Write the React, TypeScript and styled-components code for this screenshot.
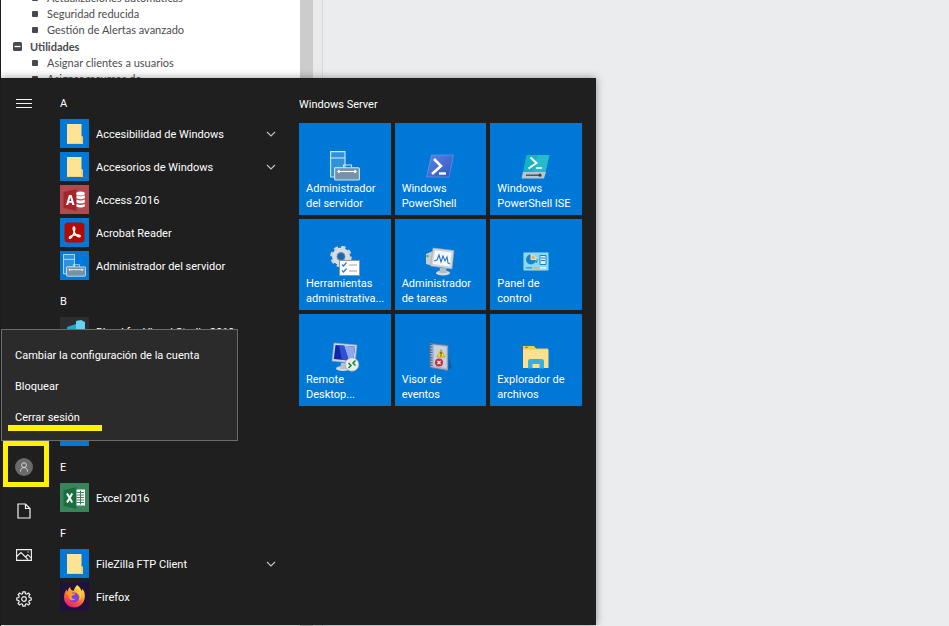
import React from 'react';
import styled, { createGlobalStyle, css } from 'styled-components';

const Global = createGlobalStyle`
  * { box-sizing: border-box; }
  html, body { margin: 0; padding: 0; }
  body { font-family: Roboto, "Noto Sans", sans-serif; font-size: 11px; background: #ebecee; overflow: hidden; }
  button { font: inherit; color: inherit; background: none; border: 0; padding: 0; margin: 0; text-align: left; cursor: pointer; }
  ul { list-style: none; margin: 0; padding: 0; }
  h2, h3 { margin: 0; font: inherit; }
  svg { display: block; flex: none; }
`;

const Desktop = styled.div`
  position: relative;
  display: flex;
  height: 100vh;
  overflow: hidden;
  border-left: 1px solid #1c1c1c;
  background: #ebecee;
`;

const TreePane = styled.nav`
  width: 299px;
  background: #ffffff;
  color: #4c4d50;
  font-family: Lato, "Noto Sans", sans-serif;
  overflow: hidden;
`;

const TreeList = styled.ul<{ $clipped?: boolean }>`
  margin-top: ${p => (p.$clipped ? '-10px' : '0')};
`;

const TreeItem = styled.li`
  display: flex;
  align-items: center;
  gap: 9px;
  padding-left: 31px;
  line-height: 16px;
  white-space: nowrap;
  &::before { content: ''; width: 6px; height: 6px; border-radius: 1px; background: #48494c; }
`;

const TreeHeading = styled.button`
  display: flex;
  align-items: center;
  gap: 8px;
  padding-left: 12px;
  line-height: 17px;
  font-weight: 700;
  color: #4a4b4f;
`;

const ScrollTrack = styled.div`
  width: 13px;
  background: #cccccd;
`;

const Splitter = styled.div`
  width: 10px;
  background: #e9eaeb;
  border-right: 1px solid #d6d7d9;
`;

const StartMenu = styled.section`
  position: absolute;
  top: 78px;
  bottom: 1px;
  left: 0;
  display: flex;
  background: #1f1f1f;
  color: #ffffff;
  box-shadow: 0 0 8px rgba(0, 0, 0, 0.4);
`;

const Rail = styled.div`
  display: flex;
  flex-direction: column;
  width: 46px;
  padding: 4px 0;
`;

const RailButton = styled.button<{ $pushDown?: boolean }>`
  display: flex;
  align-items: center;
  justify-content: center;
  height: 44px;
  ${p => p.$pushDown && css`margin-top: auto;`}
`;

const AccountButton = styled(RailButton)`
  position: relative;
`;

const HighlightFrame = styled.span`
  position: absolute;
  inset: -4px -2px 2px 2px;
  border: 5px solid #fff200;
`;

const AppList = styled.div`
  width: 231px;
  padding: 6px 2px 0 13px;
  overflow: hidden;
`;

const Letter = styled.h2`
  height: 33px;
  padding-top: 5px;
  line-height: 30px;
`;

const AppGroup = styled.section<{ $tall?: boolean }>`
  ${p => p.$tall && css`padding-bottom: 67px;`}
`;

const AppRow = styled.button`
  display: flex;
  align-items: center;
  width: 100%;
  height: 33px;
  gap: 7px;
  white-space: nowrap;
`;

const AppName = styled.span`
  flex: 1;
  padding-top: 2px;
`;

const IconBox = styled.span<{ $bg?: string }>`
  display: flex;
  align-items: center;
  justify-content: center;
  width: 29px;
  height: 29px;
  background: ${p => p.$bg || '#0078d7'};
`;

const TilePane = styled.div`
  width: 318px;
  padding: 15px 14px 14px 21px;
`;

const TileTitle = styled.h2`
  line-height: 24px;
  margin-bottom: 6px;
`;

const TileGrid = styled.div`
  display: grid;
  grid-template-columns: repeat(3, minmax(0, 1fr));
  gap: 4px;
`;

const Tile = styled.button`
  display: flex;
  flex-direction: column;
  justify-content: flex-end;
  aspect-ratio: 1;
  padding: 0 7px 4px;
  background: #0078d7;
  line-height: 15px;
  white-space: nowrap;
  svg { align-self: center; }
`;

const AccountMenu = styled.div`
  position: absolute;
  left: 0;
  bottom: 184px;
  width: 237px;
  padding: 10px 0 7px;
  background: #2b2b2b;
  border: 1px solid #6b6b6b;
`;

const AccountItem = styled.button`
  display: block;
  width: 100%;
  height: 31px;
  padding-left: 13px;
`;

const Marked = styled.span`
  position: relative;
  &::after {
    content: '';
    position: absolute;
    left: -7px;
    right: -22px;
    bottom: -7px;
    height: 6px;
    background: #fff200;
  }
`;

const Chevron = () => (
  <svg width="10" height="6" viewBox="0 0 10 6" fill="none" stroke="#c4c4c4" strokeWidth="1.1">
    <path d="M1 1l4 4 4-4" />
  </svg>
);

const Collapse = () => (
  <svg width="9" height="9" viewBox="0 0 9 9">
    <rect width="9" height="9" rx="1.5" fill="#48494c" />
    <path d="M1.5 4.5h6" stroke="#fff" strokeWidth="1.3" />
  </svg>
);

const FolderIcon = () => (
  <svg width="29" height="29" viewBox="0 0 29 29">
    <path d="M7 5h14.500v12l1.500 1v7H7z" fill="#ffe394" />
    <path d="M21.500 17l1.500 1v7h-2V17z" fill="#f5cf6b" />
    <path d="M7 24h16v1H7z" fill="#f3d27c" />
  </svg>
);

const AccessIcon = () => (
  <svg width="29" height="29" viewBox="0 0 29 29">
    <path d="M3.500 7l13-3v22l-13-3z" fill="#a4262c" />
    <path d="M6 20l3-10h2.600l3 10h-2.300l-.6-2.200H8.800L8.200 20zM9.300 16h2l-1-3.800z" fill="#fff" fillRule="evenodd" />
    <g fill="#fff">
      <ellipse cx="20.500" cy="8.500" rx="4.300" ry="2" />
      <path d="M16.500 10.200q4 2 8.300 0v3q-4.300 2-8.300 0zM16.500 14.600q4 2 8.300 0v3q-4.300 2-8.300 0zM16.500 19q4 2 8.300 0v2.400q-4.300 2-8.300 0z" />
    </g>
  </svg>
);

const AcrobatIcon = () => (
  <svg width="29" height="29" viewBox="0 0 29 29">
    <rect x="4.500" y="4.500" width="20" height="20" rx="3.500" fill="#b30b00" />
    <path d="M14 9c-1.500 0-.8 3.200.6 5.800 1.200 2.200 3 3.900 4.600 3.900 2.300 0 .8-2.300-3.600-1.900-3 .3-6.600 1.500-6.300 3.100.5 1.500 3.200-1.300 4.400-4.300C14.800 12.800 15.200 9 14 9z" fill="none" stroke="#fff" strokeWidth="1.400" />
  </svg>
);

const ServerIcon = ({ size = 30 }: { size?: number }) => (
  <svg width={size} height={size} viewBox="0 0 30 30" fill="none" stroke="#c9e8ee" strokeWidth="1.100">
    <path d="M.6 26V.6H15V17H5v9z" fill="#2d93dd" />
    <path d="M.6 7H15" />
    <path d="M13.500 16.500v-2.500h8v2.500" />
    <rect x="4.600" y="16.800" width="24.800" height="12.200" rx="1" fill="#7592a8" />
    <path d="M7.500 20.500h19" stroke="#fff" />
    <path d="M9.500 19L8 20.500 9.500 22M24.500 19l1.500 1.500-1.500 1.500" stroke="#fff" />
  </svg>
);

const BlendIcon = () => (
  <svg width="29" height="29" viewBox="0 0 29 29">
    <path d="M7 13l9-5 1-3 8 1v14l-9 5-9-4z" fill="#3fb9dc" />
    <path d="M7 10l9-3v8l-9 4z" fill="#2aa3cc" />
    <path d="M16 4l5-1 4 2v7l-9 2z" fill="#62d2ee" />
  </svg>
);

const ExcelIcon = () => (
  <svg width="29" height="29" viewBox="0 0 29 29">
    <path d="M3.500 7l13-3v22l-13-3z" fill="#1a6e3f" />
    <path d="M7 10.500l5.200 9M12.200 10.500L7 19.500" stroke="#fff" strokeWidth="2" />
    <rect x="16.500" y="6.500" width="8.500" height="16" fill="#fff" />
    <path d="M16.500 9.500h7.500M16.500 12h7.500M16.500 14.500h7.500M16.500 17h7.500M16.500 19.500h7.500M20.500 7.500v14" stroke="#39845a" strokeWidth="1" />
  </svg>
);

const FirefoxIcon = () => (
  <svg width="29" height="29" viewBox="0 0 29 29">
    <defs>
      <linearGradient id="fx" x1="0.800" y1="0" x2="0.250" y2="1">
        <stop offset="0" stopColor="#fff44f" />
        <stop offset="0.350" stopColor="#ffb02e" />
        <stop offset="0.650" stopColor="#ff5a36" />
        <stop offset="1" stopColor="#e31587" />
      </linearGradient>
    </defs>
    <path d="M17 3c3 2 4 4 4.500 6 1-.5 1-1.500.8-2.500 2 2.500 2.700 5.500 2.500 8.500-.5 6-5 10.500-10.500 10.500C8.500 25.500 4 21 4 15.500c0-3 .8-5.500 2.500-8 .2 1 .5 1.500 1 2 .5-2 1.500-3.500 2.500-4.500.2 1.500 1 3 2.500 3.500l1.500.2C14 6.500 15.500 5 17 3z" fill="url(#fx)" />
    <circle cx="14" cy="15.500" r="5" fill="#7542e5" />
    <path d="M6.500 11c3-2 5-.5 6 .5h3c-.5 2-3.500 1.500-4 3 0 2 2 3 4 2-2 3.500-7.500 1.500-7-3z" fill="#ff9a2b" />
    <path d="M16.500 10c3.500 1 4.500 5 2.500 8 3-1.500 3.500-6 .5-9z" fill="#ffcf3d" />
  </svg>
);

const MenuIcon = () => (
  <svg width="16" height="10" viewBox="0 0 16 10" stroke="#f2f2f2">
    <path d="M0 .5h16M0 4.500h16M0 8.500h16" />
  </svg>
);

const UserIcon = () => (
  <svg width="18" height="18" viewBox="0 0 18 18" fill="none" stroke="#d6d6d6" strokeWidth="1">
    <circle cx="9" cy="9" r="9" fill="#6a6a6a" stroke="none" />
    <circle cx="9" cy="7.200" r="2.400" />
    <path d="M5.500 13.500c0-2.500 1.500-3.900 3.500-3.900s3.500 1.400 3.500 3.900" />
  </svg>
);

const DocumentIcon = () => (
  <svg width="14" height="16" viewBox="0 0 14 16" fill="none" stroke="#f2f2f2" strokeWidth="1.200">
    <path d="M1 1h7.500L13 5.500V15H1z" />
    <path d="M8.500 1v4.500H13" />
  </svg>
);

const PictureIcon = () => (
  <svg width="16" height="12" viewBox="0 0 16 12" fill="none" stroke="#f2f2f2" strokeWidth="1.100">
    <path d="M.6.6h14.800v10.800H.6z" />
    <path d="M.6 7.500L5 3.500l7 7M9.500 8l2.300-2.300 3.600 3.500" />
    <path d="M11.500 3h1.300" />
  </svg>
);

const GearIcon = () => (
  <svg width="16" height="16" viewBox="0 0 16 16" fill="none" stroke="#f2f2f2" strokeWidth="1.200">
    <path d="M6.900.8h2.200l.4 1.900 1.300.5 1.600-1.100 1.500 1.500-1.100 1.600.5 1.300 1.900.4v2.200l-1.900.4-.5 1.300 1.100 1.600-1.500 1.500-1.600-1.100-1.300.5-.4 1.900H6.900l-.4-1.900-1.300-.5-1.600 1.100-1.500-1.500 1.100-1.600-.5-1.300-1.900-.4V6.900l1.900-.4.5-1.300-1.100-1.600 1.500-1.500 1.600 1.100 1.300-.5z" />
    <circle cx="8" cy="8" r="2.300" />
  </svg>
);

const PowerShellIcon = () => (
  <svg width="30" height="30" viewBox="0 0 30 30">
    <defs>
      <linearGradient id="ps" x1="0" y1="0" x2="1" y2="1">
        <stop offset="0" stopColor="#5d84e6" />
        <stop offset="1" stopColor="#3155bd" />
      </linearGradient>
    </defs>
    <path d="M6.500 4h22L24 26H1.500z" fill="url(#ps)" stroke="#6f9cf0" strokeWidth=".6" />
    <path d="M9 8l7 7-9 8" fill="none" stroke="#fff" strokeWidth="2.600" />
    <path d="M14 22.500h7" stroke="#fff" strokeWidth="2.400" />
  </svg>
);

const PowerShellIseIcon = () => (
  <svg width="30" height="30" viewBox="0 0 30 30">
    <path d="M5.500 4h23l-4 17H2z" fill="#17b3c4" />
    <path d="M17 4h11.500l-4 17H12z" fill="#35c3cf" opacity=".5" />
    <path d="M9.500 6.500l6 5.500-8 5.500" fill="none" stroke="#fff" strokeWidth="2" />
    <path d="M15 17h6" stroke="#fff" strokeWidth="1.600" />
    <path d="M2 21h23l-2 6.500H.5z" fill="#b9c4cb" />
    <path d="M5 24.200h13" stroke="#37454e" strokeWidth="1.300" />
    <circle cx="19" cy="24.200" r="1.600" fill="#37454e" />
  </svg>
);

const ToolsIcon = () => (
  <svg width="30" height="30" viewBox="0 0 30 30">
    <circle cx="11" cy="10.500" r="6.500" fill="none" stroke="#d9dde0" strokeWidth="5" />
    <circle cx="11" cy="10.500" r="9.500" fill="none" stroke="#d0d5d9" strokeWidth="2.600" strokeDasharray="4.200 3.260" />
    <circle cx="11" cy="10.500" r="4" fill="#1769b5" stroke="#7e8c98" />
    <rect x="9.500" y="14.500" width="20" height="15" fill="#fff" stroke="#8a979f" />
    <path d="M12 18.500l1.500 1.500 3-3.500M12 24.500l1.500 1.500 3-3.500" fill="none" stroke="#2a7fd0" strokeWidth="1.300" />
    <path d="M19 19h8M19 25h8" stroke="#9aa4ab" />
  </svg>
);

const TaskManagerIcon = () => (
  <svg width="30" height="30" viewBox="0 0 30 30">
    <path d="M1 8l7-3v15l-7-2z" fill="#c6cccf" />
    <path d="M1.500 9l2 .3v2l-2-.3z" fill="#56a832" />
    <ellipse cx="18" cy="27" rx="7" ry="2.500" fill="#d5dadd" />
    <path d="M15 22h6l1 5h-8z" fill="#b4bcc1" />
    <path d="M8 2l21 2.500-2 18.500L5.500 20z" fill="#cfd5d8" stroke="#98a2a9" strokeWidth=".6" />
    <path d="M10 4.500l16.500 2-1.600 14L8 18z" fill="#f4faff" />
    <path d="M9 15l3-1 2-5 2 7 2-6 2 5 2-4 1 6 2 1" fill="none" stroke="#2672bd" strokeWidth="1.100" />
  </svg>
);

const ControlPanelIcon = () => (
  <svg width="28" height="30" viewBox="0 0 28 30">
    <rect x="1.500" y="6.500" width="25" height="18" rx="1" fill="#8fd8f5" stroke="#4fb0e0" />
    <circle cx="9" cy="13.500" r="5" fill="#1583cf" />
    <path d="M9 13.500v-5a5 5 0 0 1 5 5z" fill="#f6b13a" stroke="#e9f8ff" strokeWidth=".8" />
    <path d="M18 9.500h6v9h-6z" fill="#d5f1fd" stroke="#1583cf" />
    <path d="M19 12h4M19 14.500h4M15.500 13l-1.500 4" stroke="#1583cf" />
    <path d="M4 21.800h6" stroke="#2ba0dd" strokeWidth="1.400" />
    <path d="M11 21.800h6" stroke="#f6b13a" strokeWidth="1.400" />
    <path d="M18 21.800h6" stroke="#eafaff" strokeWidth="1.400" />
  </svg>
);

const RemoteDesktopIcon = () => (
  <svg width="30" height="30" viewBox="0 0 30 30">
    <ellipse cx="13" cy="26.500" rx="7" ry="2.500" fill="#d4dadf" />
    <path d="M11 21h5l1 6h-7z" fill="#b8c1c9" />
    <path d="M4 1l23 2-2 18.500L2 19z" fill="#ccd7e5" stroke="#8fa5c0" strokeWidth=".6" />
    <path d="M5.500 3l19.500 1.800L23.300 19 3.800 17z" fill="#1226a8" />
    <path d="M14 3.800l11 1L23.300 19l-4.500-.5z" fill="#8fa9ee" />
    <path d="M9 3.300l5 .5 4.800 14.700-7-.7z" fill="#2d50d4" />
    <circle cx="22" cy="22.500" r="6.800" fill="#e8ecea" stroke="#99a5a2" strokeWidth=".7" />
    <path d="M18.500 21l2.500 2.500-2.500 2.500M25.500 18.500L23 21l2.500 2.500" fill="none" stroke="#16843c" strokeWidth="1.500" />
  </svg>
);

const EventViewerIcon = () => (
  <svg width="30" height="30" viewBox="0 0 30 30">
    <path d="M22 8l5 18-4 2z" fill="#0b4d91" opacity=".5" />
    <path d="M5 1.500l18 2v25L5 25.500z" fill="#a9b9cf" stroke="#637894" strokeWidth=".8" />
    <path d="M9 3.500l12.500 1.500v21L9 24z" fill="#c6d2e2" />
    <path d="M6 2v24" stroke="#54657e" strokeWidth="3" strokeDasharray="1.200 1.400" />
    <path d="M16 7.500l4 7.500h-8z" fill="#ffdf26" stroke="#b79200" strokeWidth=".7" />
    <path d="M16 9.800v2.600M16 13.200v1" stroke="#222" strokeWidth="1.100" />
    <circle cx="14" cy="20.500" r="4" fill="#cb2c35" />
    <path d="M12.500 19l3 3M15.500 19l-3 3" stroke="#fff" strokeWidth="1.200" />
  </svg>
);

const ExplorerIcon = () => (
  <svg width="28" height="30" viewBox="0 0 28 30">
    <path d="M1 4h11l2 2.500h12V10H1z" fill="#f0c95a" />
    <path d="M3 5.300h3" stroke="#53a353" strokeWidth="1.200" />
    <path d="M1 7.500h25.500V26H1z" fill="#ffe08a" />
    <path d="M6 26.500v-7a2.500 2.500 0 0 1 2.500-2.500h11a2.500 2.500 0 0 1 2.500 2.500v7h-4.500V22h-7v4.500z" fill="#35aee3" />
  </svg>
);

const tiles: { lines: string[]; icon: React.ReactNode }[] = [
  { lines: ['Administrador', 'del servidor'], icon: <ServerIcon /> },
  { lines: ['Windows', 'PowerShell'], icon: <PowerShellIcon /> },
  { lines: ['Windows', 'PowerShell ISE'], icon: <PowerShellIseIcon /> },
  { lines: ['Herramientas', 'administrativa...'], icon: <ToolsIcon /> },
  { lines: ['Administrador', 'de tareas'], icon: <TaskManagerIcon /> },
  { lines: ['Panel de', 'control'], icon: <ControlPanelIcon /> },
  { lines: ['Remote', 'Desktop...'], icon: <RemoteDesktopIcon /> },
  { lines: ['Visor de', 'eventos'], icon: <EventViewerIcon /> },
  { lines: ['Explorador de', 'archivos'], icon: <ExplorerIcon /> },
];

type Entry = { name: string; icon: React.ReactNode; bg?: string; folder?: boolean };

const groups: { letter: string; tall?: boolean; apps: Entry[] }[] = [
  {
    letter: 'A',
    apps: [
      { name: 'Accesibilidad de Windows', icon: <FolderIcon />, folder: true },
      { name: 'Accesorios de Windows', icon: <FolderIcon />, folder: true },
      { name: 'Access 2016', icon: <AccessIcon />, bg: '#b04a50' },
      { name: 'Acrobat Reader', icon: <AcrobatIcon /> },
      { name: 'Administrador del servidor', icon: <ServerIcon size={23} /> },
    ],
  },
  {
    letter: 'B',
    tall: true,
    apps: [
      { name: 'Blend for Visual Studio 2019', icon: <BlendIcon />, bg: '#2d2d30' },
    ],
  },
  { letter: '', apps: [] },
  { letter: 'E', apps: [{ name: 'Excel 2016', icon: <ExcelIcon />, bg: '#39845a' }] },
  {
    letter: 'F',
    apps: [
      { name: 'FileZilla FTP Client', icon: <FolderIcon />, folder: true },
      { name: 'Firefox', icon: <FirefoxIcon />, bg: '#20123a' },
    ],
  },
];

const App = () => (
  <>
    <Global />
    <Desktop>
      <TreePane>
        <TreeList $clipped>
          <TreeItem>Actualizaciones automáticas</TreeItem>
          <TreeItem>Seguridad reducida</TreeItem>
          <TreeItem>Gestión de Alertas avanzado</TreeItem>
        </TreeList>
        <TreeHeading><Collapse />Utilidades</TreeHeading>
        <TreeList>
          <TreeItem>Asignar clientes a usuarios</TreeItem>
          <TreeItem>Asignar recursos de</TreeItem>
        </TreeList>
      </TreePane>
      <ScrollTrack />
      <Splitter />
      <StartMenu>
        <Rail>
          <RailButton aria-label="Menú"><MenuIcon /></RailButton>
          <AccountButton $pushDown aria-label="Cuenta"><UserIcon /><HighlightFrame /></AccountButton>
          <RailButton aria-label="Documentos"><DocumentIcon /></RailButton>
          <RailButton aria-label="Imágenes"><PictureIcon /></RailButton>
          <RailButton aria-label="Configuración"><GearIcon /></RailButton>
        </Rail>
        <AppList>
          {groups.map((g, i) =>
            g.letter ? (
              <AppGroup key={i} $tall={g.tall}>
                <Letter>{g.letter}</Letter>
                {g.apps.map(a => (
                  <AppRow key={a.name}>
                    <IconBox $bg={a.bg}>{a.icon}</IconBox>
                    <AppName>{a.name}</AppName>
                    {a.folder && <Chevron />}
                  </AppRow>
                ))}
              </AppGroup>
            ) : (
              <AppRow key={i} aria-hidden="true"><IconBox /></AppRow>
            )
          )}
        </AppList>
        <TilePane>
          <TileTitle>Windows Server</TileTitle>
          <TileGrid>
            {tiles.map(t => (
              <Tile key={t.lines.join(' ')}>
                {t.icon}
                <span>{t.lines[0]}<br />{t.lines[1]}</span>
              </Tile>
            ))}
          </TileGrid>
        </TilePane>
        <AccountMenu>
          <AccountItem>Cambiar la configuración de la cuenta</AccountItem>
          <AccountItem>Bloquear</AccountItem>
          <AccountItem><Marked>Cerrar sesión</Marked></AccountItem>
        </AccountMenu>
      </StartMenu>
    </Desktop>
  </>
);

export default App;
